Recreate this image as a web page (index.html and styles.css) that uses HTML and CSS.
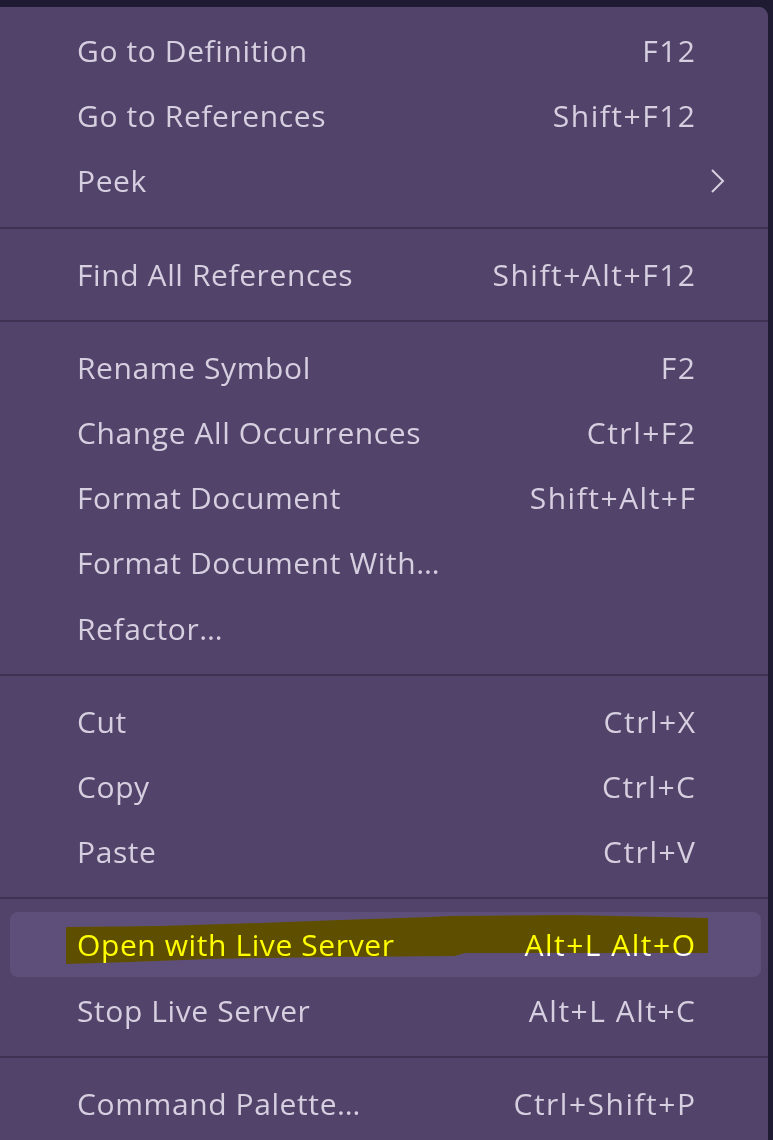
FILE: index.html
```html
<!DOCTYPE html>
<html lang="en">
<head>
<meta charset="utf-8">
<title>Context menu</title>
<link rel="stylesheet" href="styles.css">
</head>
<body>
<div class="menu">
  <div class="item"><span class="label">Go to Definition</span><span class="key">F12</span><span class="sub"></span></div>
  <div class="item"><span class="label">Go to References</span><span class="key">Shift+F12</span><span class="sub"></span></div>
  <div class="item"><span class="label">Peek</span><span class="key"></span><span class="sub"><svg width="16" height="26" viewBox="0 0 16 26"><polyline points="2,2 13,13 2,24" fill="none" stroke="#d6cfe0" stroke-width="2"/></svg></span></div>
  <div class="sep"></div>
  <div class="item"><span class="label">Find All References</span><span class="key">Shift+Alt+F12</span><span class="sub"></span></div>
  <div class="sep"></div>
  <div class="item"><span class="label">Rename Symbol</span><span class="key">F2</span><span class="sub"></span></div>
  <div class="item"><span class="label">Change All Occurrences</span><span class="key">Ctrl+F2</span><span class="sub"></span></div>
  <div class="item"><span class="label">Format Document</span><span class="key">Shift+Alt+F</span><span class="sub"></span></div>
  <div class="item"><span class="label">Format Document With…</span><span class="key"></span><span class="sub"></span></div>
  <div class="item"><span class="label">Refactor…</span><span class="key"></span><span class="sub"></span></div>
  <div class="sep"></div>
  <div class="item"><span class="label">Cut</span><span class="key">Ctrl+X</span><span class="sub"></span></div>
  <div class="item"><span class="label">Copy</span><span class="key">Ctrl+C</span><span class="sub"></span></div>
  <div class="item"><span class="label">Paste</span><span class="key">Ctrl+V</span><span class="sub"></span></div>
  <div class="sep"></div>
  <div class="item hover"><span class="label">Open with Live Server</span><span class="key">Alt+L Alt+O</span><span class="sub"></span>
    <svg class="marker" width="751" height="65" viewBox="0 0 751 65"><polygon points="56,15 150,14 250,11 330,8 420,5 440,4 560,3 698,6 698,41 455,41 445,44 330,45 250,46 200,47 120,50 56,52" fill="#ffff00"/></svg>
  </div>
  <div class="item"><span class="label">Stop Live Server</span><span class="key">Alt+L Alt+C</span><span class="sub"></span></div>
  <div class="sep"></div>
  <div class="item"><span class="label">Command Palette…</span><span class="key">Ctrl+Shift+P</span><span class="sub"></span></div>
</div>
</body>
</html>
```
FILE: styles.css
```css
html, body {
  margin: 0;
  padding: 0;
  background: #1e1b33;
  height: 1140px;
  overflow: hidden;
}

.menu {
  margin-top: 7px;
  width: 768px;
  box-sizing: border-box;
  background: #52436a;
  border-radius: 0 9px 0 0;
  padding: 11px 7px 20px 10px;
  font-family: "Open Sans", "Noto Sans", sans-serif;
  font-size: 30px;
  color: #d6cfe0;
}

.item {
  position: relative;
  display: flex;
  align-items: center;
  height: 65.2px;
  padding: 0 35px 0 67px;
  border-radius: 8px;
}

.label {
  flex: 1;
  white-space: nowrap;
  letter-spacing: 0.6px;
}

.key {
  white-space: nowrap;
  letter-spacing: 1.5px;
  margin-right: -1.5px;
}

.sub {
  width: 31px;
  display: flex;
  justify-content: flex-end;
  align-items: center;
}

.sub svg {
  display: block;
}

.sep {
  height: 2px;
  background: #3d3252;
  margin: 13px -7px 13px -10px;
}

.hover {
  background: #5e4f7a;
  color: #ffffff;
}

.marker {
  position: absolute;
  left: 0;
  top: 0;
  mix-blend-mode: multiply;
  pointer-events: none;
}
```
